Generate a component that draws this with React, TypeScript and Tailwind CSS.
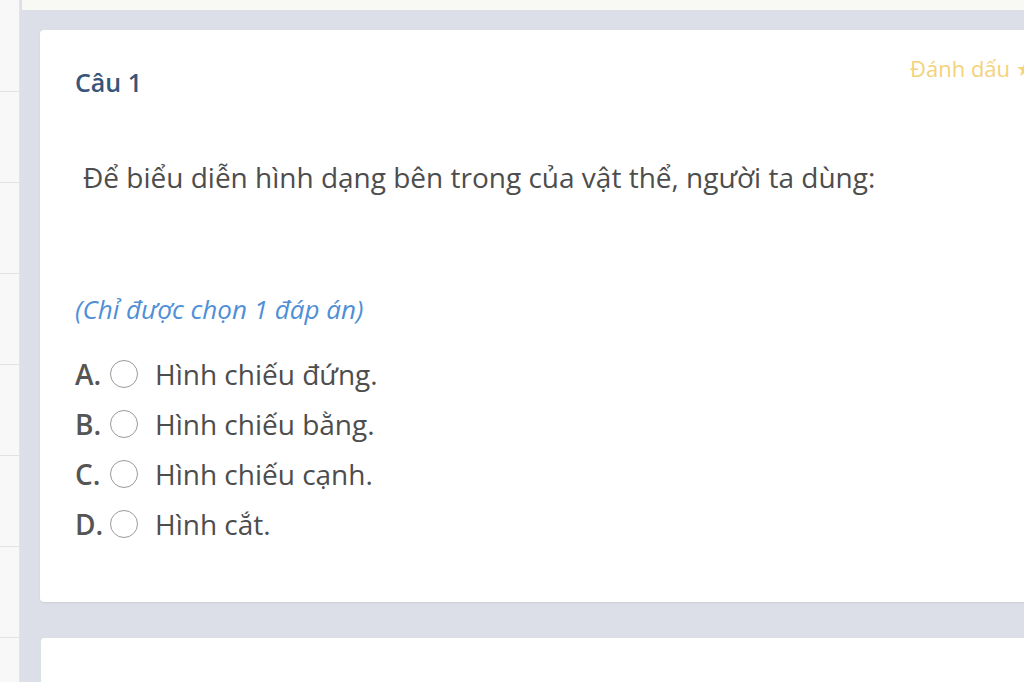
const options = [
  { key: "A.", text: "Hình chiếu đứng." },
  { key: "B.", text: "Hình chiếu bằng." },
  { key: "C.", text: "Hình chiếu cạnh." },
  { key: "D.", text: "Hình cắt." },
];

function SideList() {
  return (
    <div className="w-[20px] shrink-0 bg-[#f8f8f8] border-r border-[#e4e4e4] pt-[91px]">
      {[0, 1, 2, 3, 4, 5, 6].map((i) => (
        <div key={i} className="h-[91px] border-t border-[#e2e2e2]" />
      ))}
    </div>
  );
}

function QuestionCard() {
  return (
    <div className="w-[1040px] h-[572px] bg-white rounded-[4px] shadow-[0_1px_2px_rgba(0,0,0,0.08)] pl-[35px] pt-[36px] relative">
      <span className="absolute left-[870px] top-[22px] whitespace-nowrap text-[22px] text-[#f3d27a] flex items-center gap-[6px]">
        Đánh dấu
        <span className="text-[20px]">★</span>
      </span>
      <h3 className="text-[25px] leading-[32px] font-semibold text-[#37557a]">Câu 1</h3>
      <p className="mt-[61px] ml-[8px] text-[28px] leading-[36px] text-[#4d4d4d]">
        Để biểu diễn hình dạng bên trong của vật thể, người ta dùng:
      </p>
      <p className="mt-[99px] text-[26px] leading-[30px] italic text-[#4f8fd6]">
        (Chỉ được chọn 1 đáp án)
      </p>
      <div className="mt-[25px] flex flex-col">
        {options.map((o) => (
          <label key={o.key} className="h-[50px] flex items-center text-[28px] text-[#4d4d4d]">
            <span className="w-[35px] font-semibold text-[#555]">{o.key}</span>
            <span className="w-[28px] h-[28px] rounded-full border-[1.5px] border-[#9a9a9a] bg-white" />
            <span className="ml-[17px]">{o.text}</span>
          </label>
        ))}
      </div>
    </div>
  );
}

export default function App() {
  return (
    <div
      className="w-[1024px] h-[682px] overflow-hidden flex bg-[#dcdee8]"
      style={{ fontFamily: '"Open Sans", "Noto Sans", sans-serif' }}
    >
      <SideList />
      <div className="flex-1 flex flex-col">
        <div className="h-[10px] bg-[#f8f8f5] shrink-0 ml-[2px]" />
        <div className="pt-[20px] pl-[20px] flex flex-col gap-[36px]">
          <QuestionCard />
          <div className="w-[1040px] h-[200px] bg-white rounded-[4px] border-l border-[#d6e6dc] pl-[35px] pt-[38px]">
            <h3 className="text-[25px] leading-[32px] font-semibold text-[#37557a]">Câu 2</h3>
          </div>
        </div>
      </div>
    </div>
  );
}
